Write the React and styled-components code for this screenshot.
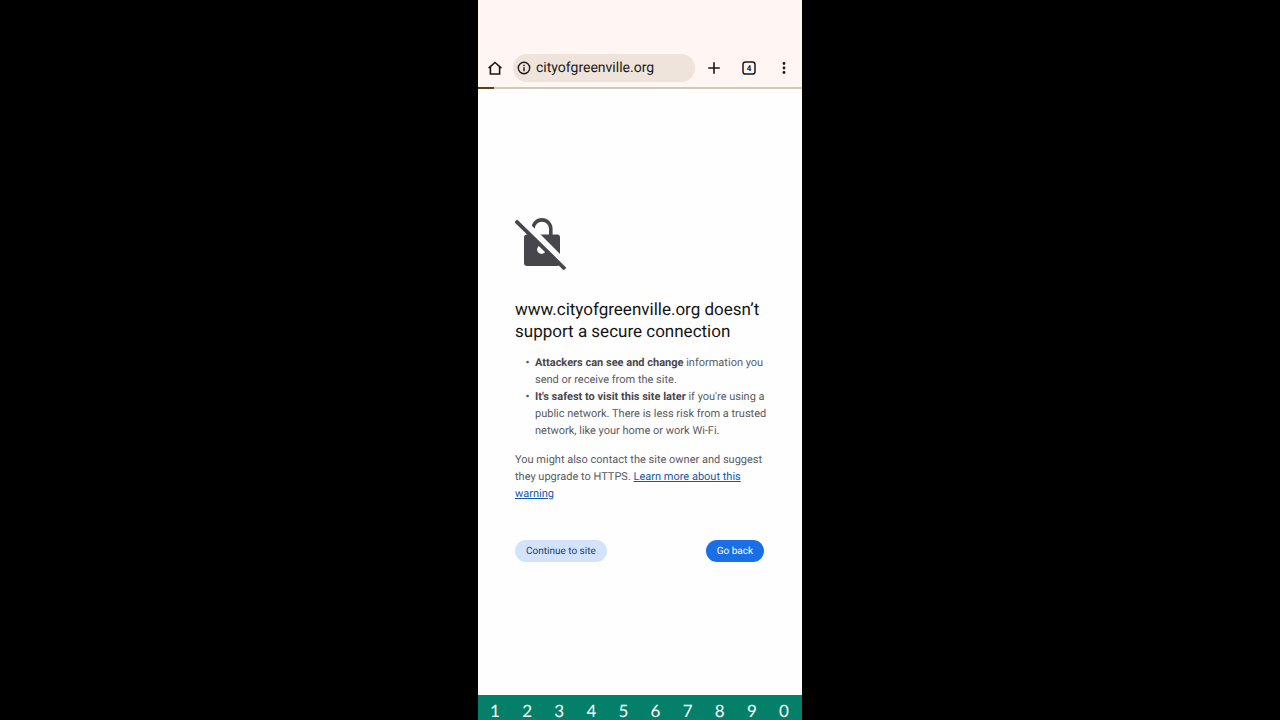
import React from 'react';
import styled, { createGlobalStyle } from 'styled-components';

const digits = ['1', '2', '3', '4', '5', '6', '7', '8', '9', '0'];

const App = () => {
  return (
    <>
      <GlobalStyle />
      <Phone>
        <Toolbar>
          <IconButton aria-label="Home">
            <svg width="14" height="14" viewBox="0 0 14 14" fill="none" stroke="#1d1816" strokeWidth="1.6">
              <path d="M.6 7.2 7 1.5l6.4 5.7" />
              <path d="M2.4 5.8v7.2h9.2V5.8" />
            </svg>
          </IconButton>
          <AddressBar>
            <svg width="14" height="14" viewBox="0 0 14 14" fill="none" stroke="#1d1816" strokeWidth="1.4">
              <circle cx="7" cy="7" r="5.7" />
              <path d="M7 6.3v4M7 3.8v1.5" />
            </svg>
            <AddressInput aria-label="Address" defaultValue="cityofgreenville.org" />
          </AddressBar>
          <Actions>
            <IconButton aria-label="New tab">
              <svg width="14" height="14" viewBox="0 0 14 14" stroke="#1d1816" strokeWidth="1.6">
                <path d="M7 1.2v11.6M1.2 7h11.6" />
              </svg>
            </IconButton>
            <IconButton aria-label="Open tabs">
              <svg width="14" height="14" viewBox="0 0 14 14">
                <rect x="1" y="1" width="12" height="12" rx="2.6" fill="none" stroke="#1d1816" strokeWidth="1.5" />
                <TabCount x="7" y="10" textAnchor="middle">4</TabCount>
              </svg>
            </IconButton>
            <IconButton aria-label="More">
              <svg width="14" height="14" viewBox="0 0 14 14" fill="#1d1816">
                <circle cx="7" cy="2.5" r="1.4" />
                <circle cx="7" cy="7" r="1.4" />
                <circle cx="7" cy="11.5" r="1.4" />
              </svg>
            </IconButton>
          </Actions>
        </Toolbar>
        <Progress>
          <ProgressFill />
        </Progress>
        <Page>
          <LockIcon width="52" height="52" viewBox="0 0 52 52" fill="none">
            <path d="M18 13v-2.2a8.9 8.9 0 0 1 17.8 0V18" stroke="#47464b" strokeWidth="3.6" />
            <rect x="9" y="16.5" width="36" height="31.5" rx="3" fill="#47464b" />
            <circle cx="26.5" cy="31.5" r="4.4" fill="#fefefe" />
            <path d="M7 2.2 51 46.2" stroke="#fefefe" strokeWidth="6" />
            <path d="M.8 2.8 50 51" stroke="#47464b" strokeWidth="3.8" />
          </LockIcon>
          <Title>www.cityofgreenville.org doesn’t support a secure connection</Title>
          <Reasons>
            <li><b>Attackers can see and change</b> information you send or receive from the site.</li>
            <li><b>It's safest to visit this site later</b> if you're using a public network. There is less risk from a trusted network, like your home or work Wi-Fi.</li>
          </Reasons>
          <Note>
            You might also contact the site owner and suggest they upgrade to HTTPS.{' '}
            <a href="#learn-more">Learn more about this warning</a>
          </Note>
          <ButtonRow>
            <PillButton>Continue to site</PillButton>
            <PillButton $primary>Go back</PillButton>
          </ButtonRow>
        </Page>
        <Keyboard>
          {digits.map((digit) => (
            <Key key={digit}>{digit}</Key>
          ))}
        </Keyboard>
      </Phone>
    </>
  );
};

const GlobalStyle = createGlobalStyle`
  * {
    box-sizing: border-box;
  }

  body {
    margin: 0;
    background: #000;
    font-family: Roboto, "Liberation Sans", sans-serif;
    text-rendering: geometricPrecision;
  }

  button, input {
    padding: 0;
    border: none;
    background: none;
    font-family: inherit;
    text-rendering: inherit;
  }
`;

const Phone = styled.div`
  display: flex;
  flex-direction: column;
  max-width: 324px;
  min-height: 100vh;
  margin: 0 auto;
  background-color: #fefefe;
`;

const Toolbar = styled.header`
  display: flex;
  align-items: center;
  padding: 54px 11px 5px 10px;
  background-color: #fff6f4;
`;

const IconButton = styled.button`
  display: flex;
`;

const AddressBar = styled.div`
  flex: 1;
  display: flex;
  align-items: center;
  gap: 5px;
  min-width: 0;
  height: 28px;
  margin: 0 12px 0 11px;
  padding: 0 4px;
  border-radius: 14px;
  background-color: #efe4dc;
`;

const AddressInput = styled.input`
  flex: 1;
  min-width: 0;
  font-size: 14px;
  color: #1d1816;
  outline: none;
`;

const Actions = styled.div`
  display: flex;
  align-items: center;
  gap: 21px;
`;

const TabCount = styled.text`
  font-size: 8px;
  font-weight: bold;
  fill: #1d1816;
`;

const Progress = styled.div`
  height: 2px;
  background-color: #d6c6b4;
`;

const ProgressFill = styled.div`
  width: 5%;
  height: 100%;
  background-color: #5c4310;
`;

const Page = styled.main`
  flex: 1;
  padding: 129px 33px 0 37px;
`;

const LockIcon = styled.svg`
  display: block;
`;

const Title = styled.h1`
  margin: 29px 0 11px;
  font-size: 17px;
  line-height: 22px;
  font-weight: 400;
  color: #141414;
`;

const Reasons = styled.ul`
  margin: 0 0 12px;
  padding-left: 20px;
  list-style-type: '•  ';
  font-size: 11px;
  line-height: 17px;
  color: #5a5a5e;

  b {
    color: #47474b;
  }

  li::marker {
    font-weight: bold;
  }
`;

const Note = styled.p`
  margin: 0;
  font-size: 11px;
  line-height: 17px;
  color: #5a5a5e;

  a {
    color: #1558b0;
  }
`;

const ButtonRow = styled.div`
  display: flex;
  justify-content: space-between;
  margin-top: 38px;
  padding-right: 5px;
`;

const PillButton = styled.button`
  height: 22px;
  padding: 0 11px;
  border-radius: 11px;
  font-size: 10px;
  color: ${(props) => (props.$primary ? '#fff' : '#1b3f73')};
  background-color: ${(props) => (props.$primary ? '#1a6fe4' : '#d3e3fc')};
`;

const Keyboard = styled.footer`
  display: grid;
  grid-template-columns: repeat(10, 1fr);
  padding: 7px 2px 0 1px;
  background-color: #047f6a;
`;

const Key = styled.button`
  font-family: Lato, sans-serif;
  font-size: 17px;
  line-height: 18px;
  color: #fff;
`;

export default App;
